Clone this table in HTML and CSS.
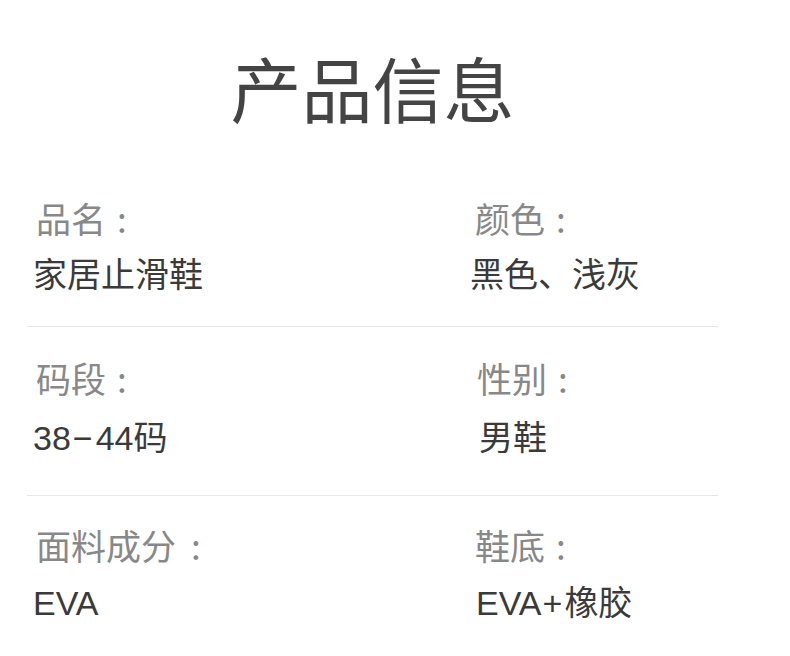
FILE: index.html
```html
<!DOCTYPE html>
<html lang="zh-CN">
<head>
<meta charset="utf-8">
<title>产品信息</title>
<link rel="stylesheet" href="styles.css">
</head>
<body>
<div class="page">
  <h1 class="title">产品信息</h1>
  <div class="table">
    <div class="row">
      <div class="cell">
        <div class="label">品名<span class="colon">:</span></div>
        <div class="value">家居止滑鞋</div>
      </div>
      <div class="cell cell-right">
        <div class="label">颜色<span class="colon">:</span></div>
        <div class="value value-shift">黑色、浅灰</div>
      </div>
    </div>
    <div class="row">
      <div class="cell">
        <div class="label">码段<span class="colon">:</span></div>
        <div class="value">38<span class="dash">−</span>44码</div>
      </div>
      <div class="cell cell-right">
        <div class="label label-r2">性别<span class="colon">:</span></div>
        <div class="value value-r2">男鞋</div>
      </div>
    </div>
    <div class="row">
      <div class="cell">
        <div class="label">面料成分<span class="colon colon-wide">:</span></div>
        <div class="value">EVA</div>
      </div>
      <div class="cell cell-right">
        <div class="label">鞋底<span class="colon">:</span></div>
        <div class="value">EVA<span class="plus">+</span>橡胶</div>
      </div>
    </div>
  </div>
</div>
</body>
</html>
```
FILE: styles.css
```css
html, body {
  margin: 0;
  padding: 0;
  background: #ffffff;
}

body {
  font-family: "Noto Sans CJK SC", "Noto Sans", sans-serif;
  width: 790px;
  height: 656px;
  overflow: hidden;
}

.page {
  padding: 36px 0 0 27px;
  width: 691px;
}

.title {
  margin: 0;
  height: 100px;
  line-height: 100px;
  font-size: 71px;
  font-weight: 400;
  color: #444444;
  text-align: center;
}

.table {
  margin-top: 31px;
}

.row {
  display: grid;
  grid-template-columns: 443px 1fr;
  border-bottom: 1px solid #e6e6e6;
}

.row:nth-child(1) {
  padding: 31px 0 31px;
}

.row:nth-child(2) {
  padding: 31px 0 37px;
}

.row:nth-child(3) {
  padding: 29px 0 30px;
  border-bottom: none;
}

.cell {
  display: flex;
  flex-direction: column;
}

.label {
  height: 40px;
  line-height: 40px;
  font-size: 35px;
  color: #888888;
  padding-left: 9px;
  white-space: nowrap;
}

.colon {
  margin-left: 11px;
}

.colon-wide {
  margin-left: 15px;
}

.value {
  margin-top: 18px;
  height: 40px;
  line-height: 40px;
  font-family: "Liberation Sans", "Noto Sans CJK SC", sans-serif;
  font-size: 34px;
  color: #3a3a3a;
  padding-left: 6px;
  white-space: nowrap;
}

.dash {
  margin: 0 3px 0 2px;
}

.plus {
  margin: 0 2px 0 1px;
}

.row:nth-child(1) .value {
  margin-top: 17px;
}

.row:nth-child(2) .value {
  margin-top: 20px;
}

.cell-right .label {
  padding-left: 5px;
}

.cell-right .value {
  padding-left: 6px;
}

.cell-right .value-shift {
  padding-left: 0;
}

.cell-right .label-r2 {
  padding-left: 7px;
}

.cell-right .value-r2 {
  padding-left: 9px;
}
```
